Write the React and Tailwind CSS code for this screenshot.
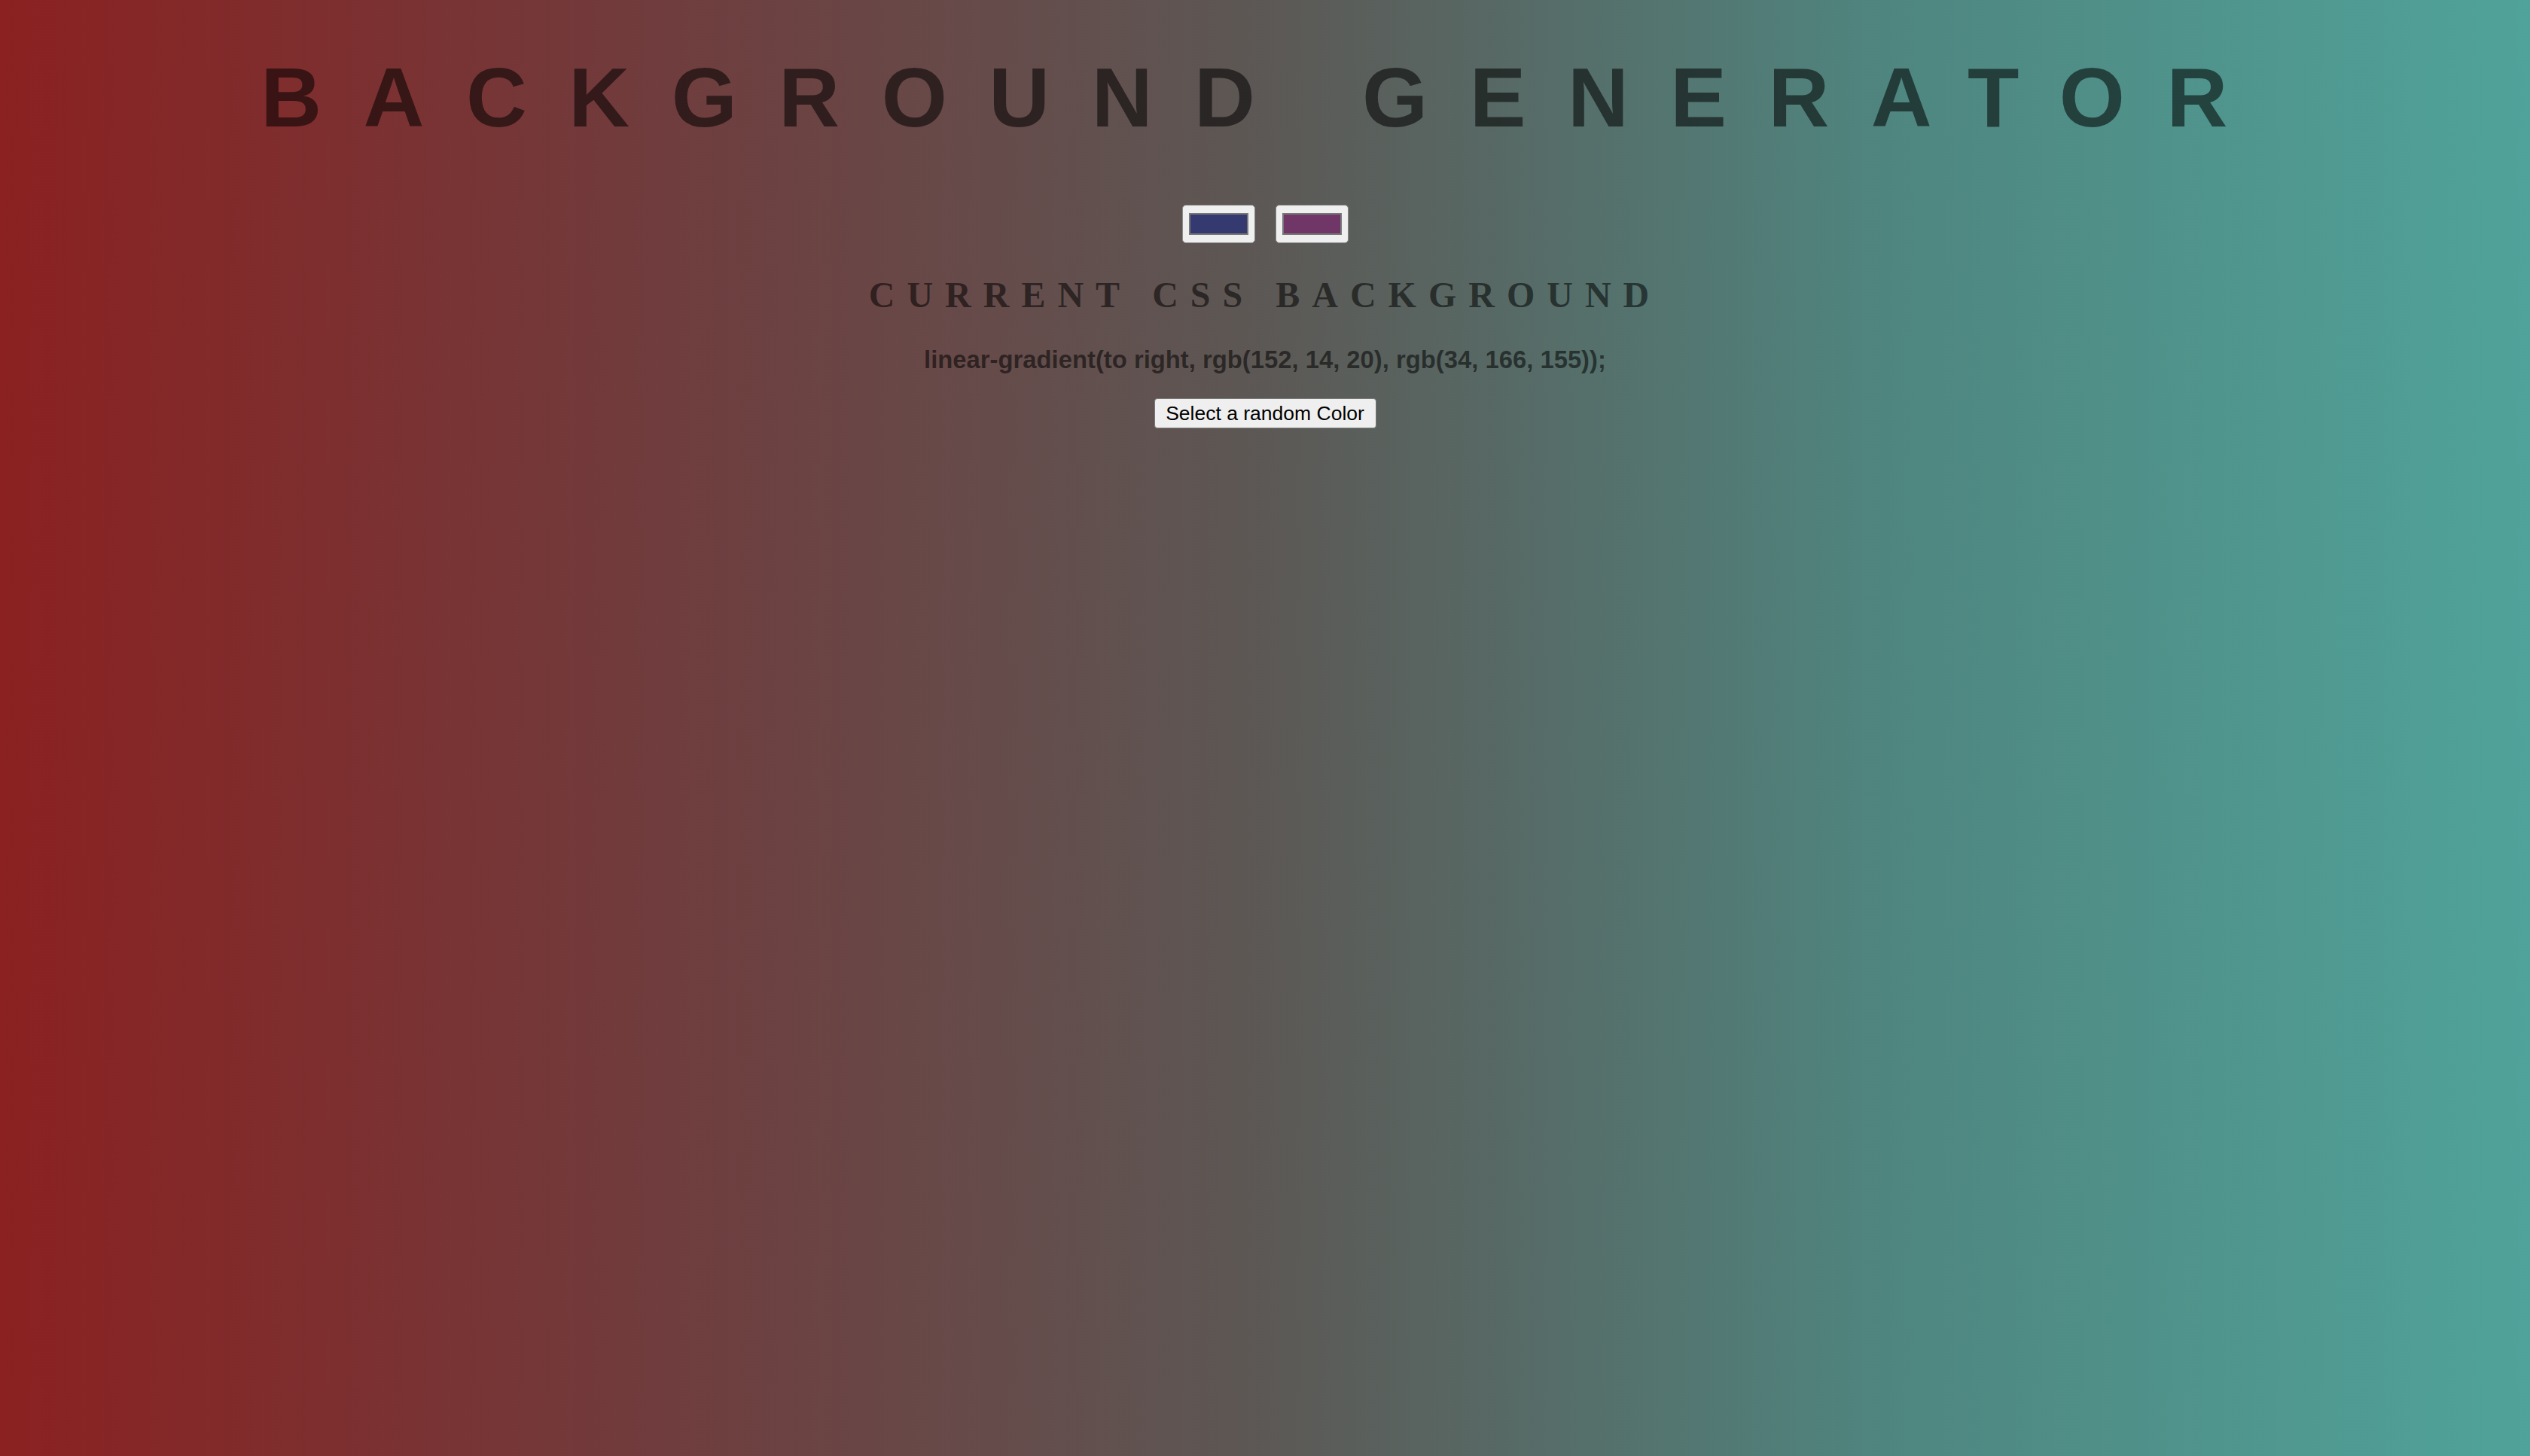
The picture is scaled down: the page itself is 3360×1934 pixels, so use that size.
import React, { useState } from "react";

const ColorSwatch = ({ color }) => {
    return (
        <div className="w-[97px] h-[51px] rounded-[5px] border border-[#8a8a8a] bg-[#efefef] flex items-center justify-center">
            <div className="w-[79px] h-[29px] border-2 border-[#777777]" style={{ backgroundColor: color }} />
        </div>
    );
};

const App = () => {
    const [colors] = useState({ first: "#343a6f", second: "#703668" });

    return (
        <div className="min-h-[1934px] w-full flex flex-col items-center bg-[linear-gradient(to_right,#8b2121_0%,#713b3c_25%,#5c5855_50%,#4f8680_75%,#50a39a_100%)]">
            <h1 className="mt-[74px] text-[112px] leading-none font-bold tracking-[55.5px] text-black/55 font-['Liberation_Sans',Arial,sans-serif] whitespace-nowrap">
                BACKGROUND GENERATOR
            </h1>

            <div className="mt-[86px] flex gap-[27px]">
                <ColorSwatch color={colors.first} />
                <ColorSwatch color={colors.second} />
            </div>

            <h2 className="mt-[45px] text-[48px] leading-none font-bold tracking-[16px] text-black/55 font-['Liberation_Serif','Times_New_Roman',serif] whitespace-nowrap">
                CURRENT CSS BACKGROUND
            </h2>

            <h3 className="mt-[46px] text-[32.8px] leading-none font-bold text-black/55 font-['Liberation_Sans',Arial,sans-serif] whitespace-nowrap">
                linear-gradient(to right, rgb(152, 14, 20), rgb(34, 166, 155));
            </h3>

            <button className="mt-[34px] w-[295px] h-[40px] rounded-[4px] border border-[#7a7a7a] bg-[#efefef] text-black text-[26.5px] leading-none font-['Liberation_Sans',Arial,sans-serif]">
                Select a random Color
            </button>
        </div>
    );
};

export default App;
